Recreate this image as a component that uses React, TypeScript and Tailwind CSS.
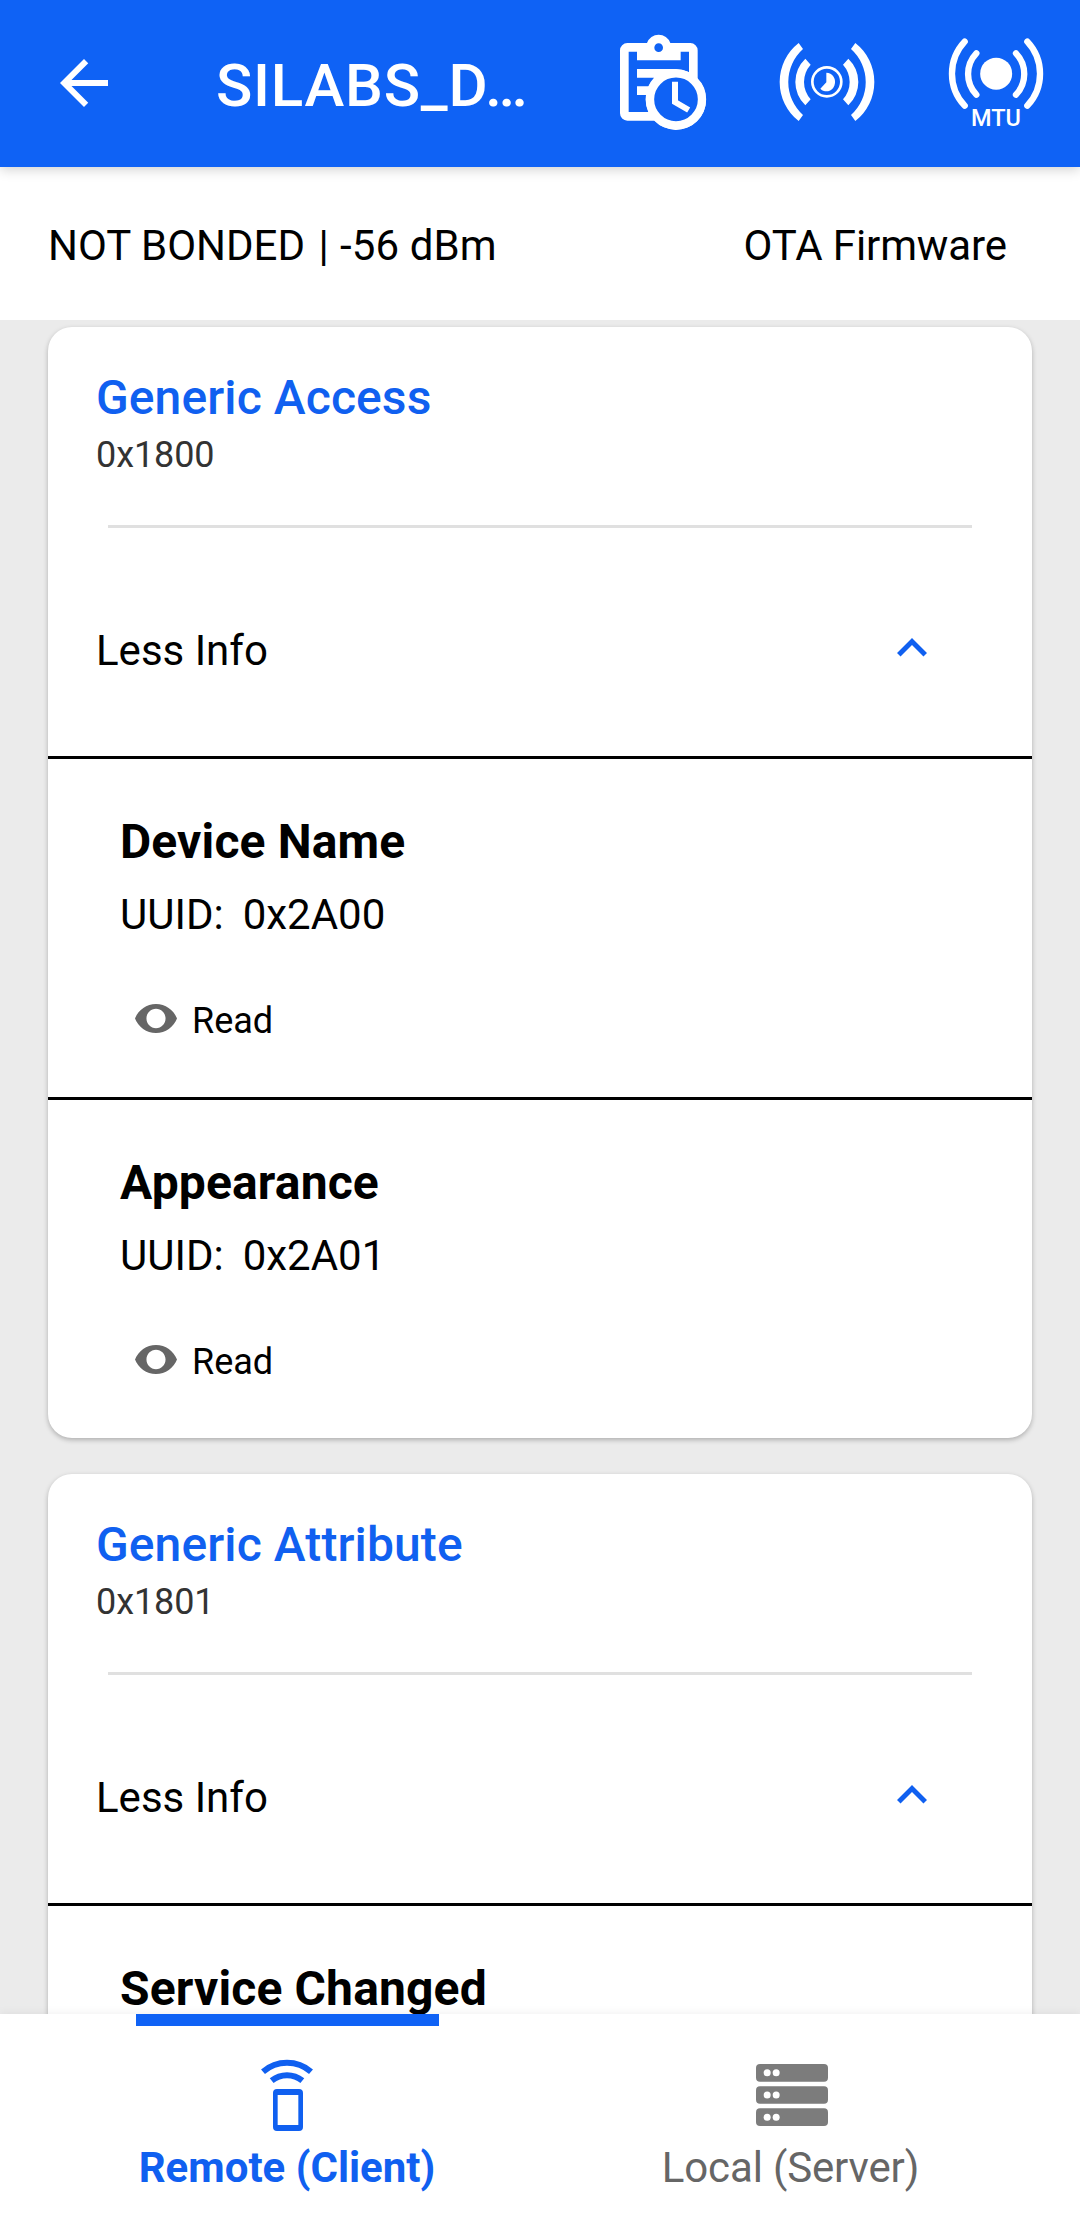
type Characteristic = { name: string; uuid: string };
type Service = { name: string; uuid: string; characteristics: Characteristic[] };

const services: Service[] = [
  {
    name: 'Generic Access',
    uuid: '0x1800',
    characteristics: [
      { name: 'Device Name', uuid: '0x2A00' },
      { name: 'Appearance', uuid: '0x2A01' },
    ],
  },
  {
    name: 'Generic Attribute',
    uuid: '0x1801',
    characteristics: [{ name: 'Service Changed', uuid: '' }],
  },
];

function BackIcon() {
  return (
    <svg className="size-[72px]" viewBox="0 0 24 24" fill="currentColor">
      <path d="M20 11H7.83l5.59-5.59L12 4l-8 8 8 8 1.41-1.41L7.83 13H20v-2z" />
    </svg>
  );
}

function LogIcon() {
  return (
    <svg className="h-[96px] w-[87px] shrink-0" viewBox="60 43 261 288">
      <path
        fill="white"
        fillRule="evenodd"
        d="M82 70H141A37 37 0 0 1 211 70H271A22 22 0 0 1 293 92V178A90 90 0 1 1 163 303H82A22 22 0 0 1 60 281V92A22 22 0 0 1 82 70ZM86 96V277H145A90 90 0 0 1 138 226H111V200H145A90 90 0 0 1 162 174H111V148H228A90 90 0 0 1 267 158V96H242V122H111V96ZM176 71A13 13 0 1 0 176 97A13 13 0 1 0 176 71Z"
      />
      <circle cx="228" cy="239" r="78" fill="#0f62f5" stroke="white" strokeWidth="25" />
      <path d="M225 186V247L266 271" fill="none" stroke="white" strokeWidth="18" />
    </svg>
  );
}

function IntervalIcon() {
  return (
    <svg className="h-[80px] w-[96px] shrink-0" viewBox="538 66 288 240">
      <g fill="white">
        <path d="M597 69A148.6 148.6 0 0 0 597 303L610 285A133 133 0 0 1 610 87Z" />
        <path d="M617 116A96.7 96.7 0 0 0 617 256L633 238A77.6 77.6 0 0 1 633 134Z" />
        <path d="M767 69A148.6 148.6 0 0 1 767 303L754 285A133 133 0 0 0 754 87Z" />
        <path d="M746 116A96.7 96.7 0 0 1 746 256L730 238A77.6 77.6 0 0 0 730 134Z" />
        <path d="M680 158A26 28 0 1 1 662 206L680 187Z" />
      </g>
      <circle cx="681.5" cy="185.5" r="43.5" fill="none" stroke="white" strokeWidth="8" />
    </svg>
  );
}

function MtuIcon() {
  return (
    <div className="relative h-[90px] w-[96px] shrink-0">
      <svg className="h-[90px] w-[96px]" viewBox="323 55 288 270">
        <circle cx="467.5" cy="162" r="48" fill="white" />
        <g fill="none" stroke="white" strokeWidth="19" strokeLinecap="round">
          <path d="M373 66A140 140 0 0 0 373 258" />
          <path d="M408 101A90 90 0 0 0 408 225" />
          <path d="M561 66A140 140 0 0 1 561 258" />
          <path d="M527 101A90 90 0 0 1 527 225" />
        </g>
      </svg>
      <span className="absolute top-[65px] left-[23px] text-[23.5px] leading-[30px] font-medium">MTU</span>
    </div>
  );
}

function ChevronUp() {
  return (
    <svg className="size-[60px]" viewBox="0 0 24 24" fill="currentColor">
      <path d="M12 8l-6 6 1.41 1.41L12 10.83l4.59 4.58L18 14z" />
    </svg>
  );
}

function EyeIcon() {
  return (
    <svg className="h-[29px] w-[42px]" viewBox="1 4.5 22 15" preserveAspectRatio="none" fill="#666666">
      <path d="M12 4.5C7 4.5 2.73 7.61 1 12c1.73 4.39 6 7.5 11 7.5s9.27-3.11 11-7.5c-1.73-4.39-6-7.5-11-7.5zM12 17c-2.76 0-5-2.24-5-5s2.24-5 5-5 5 2.24 5 5-2.24 5-5 5z" />
    </svg>
  );
}

function RemoteIcon() {
  return (
    <svg className="h-[72px] w-[52px]" viewBox="423 537 156 216">
      <g fill="none" stroke="currentColor" strokeWidth="18">
        <path d="M429 575A110 110 0 0 1 573 575" />
        <path d="M455 602A72 72 0 0 1 547 602" />
      </g>
      <path
        fill="currentColor"
        fillRule="evenodd"
        d="M471 627H537A12 12 0 0 1 549 639V741A12 12 0 0 1 537 753H471A12 12 0 0 1 459 741V639A12 12 0 0 1 471 627ZM473 645V735H535V645Z"
      />
    </svg>
  );
}

function ServerIcon() {
  return (
    <svg className="h-[62px] w-[72px]" viewBox="0 0 216 186">
      {[0, 66.5, 133].map((y) => (
        <g key={y}>
          <rect y={y} width="216" height="53" rx="12" fill="#7c7c7c" />
          <circle cx="33.5" cy={y + 26.5} r="10.5" fill="white" />
          <circle cx="60.5" cy={y + 26.5} r="10.5" fill="white" />
        </g>
      ))}
    </svg>
  );
}

function CharacteristicRow({ name, uuid }: Characteristic) {
  return (
    <div className="border-t-[3px] border-black pt-[55px] pb-[55px] pl-[72px]">
      <h3 className="text-[48px] leading-[56px] font-bold tracking-[0.15px]">{name}</h3>
      {uuid && (
        <>
          <p className="mt-[20px] flex gap-[19px] text-[42px] leading-[50px]">
            <span>UUID:</span>
            <span>{uuid}</span>
          </p>
          <div className="mt-[60px] flex h-[42px] items-start pl-[15px]">
            <div className="mt-[4px]">
              <EyeIcon />
            </div>
            <span className="ml-[15px] text-[36px] leading-[42px]">Read</span>
          </div>
        </>
      )}
    </div>
  );
}

function ServiceCard({ name, uuid, characteristics }: Service) {
  return (
    <section className="shrink-0 overflow-hidden rounded-[24px] bg-white shadow-[0_2px_5px_rgba(0,0,0,0.26)]">
      <div className="px-[48px] pt-[43px]">
        <h2 className="text-[48px] leading-[56px] font-medium tracking-[0.1px] text-[#1060f0]">{name}</h2>
        <p className="mt-[8px] text-[36px] leading-[42px] tracking-[-0.1px] text-[#333333]">{uuid}</p>
      </div>
      <div className="mx-[60px] mt-[49px] h-[3px] bg-[#e0e0e0]" />
      <div className="flex h-[228px] items-start justify-between pr-[90px] pl-[48px]">
        <span className="mt-[98px] text-[42px] leading-[50px]">Less Info</span>
        <span className="mt-[90px] text-[#1060f0]">
          <ChevronUp />
        </span>
      </div>
      {characteristics.map((c) => (
        <CharacteristicRow key={c.name} {...c} />
      ))}
    </section>
  );
}

export default function App() {
  return (
    <div className="flex h-[2231px] w-[1080px] flex-col overflow-hidden bg-[#ebebeb] font-['Roboto',sans-serif] text-black">
      <header className="relative z-10 flex h-[167px] shrink-0 items-start bg-[#0f62f5] text-white shadow-[0_2px_12px_rgba(0,0,0,0.2)]">
        <div className="mt-[47px] ml-[48px]">
          <BackIcon />
        </div>
        <h1 className="mt-[51px] ml-[96px] w-[404px] text-[60px] leading-[70px] font-medium tracking-[0.75px]">
          SILABS_D…
        </h1>
        <div className="mt-[34px]">
          <LogIcon />
        </div>
        <div className="mt-[42px] ml-[72px]">
          <IntervalIcon />
        </div>
        <div className="mt-[38px] ml-[73px]">
          <MtuIcon />
        </div>
      </header>

      <div className="flex h-[153px] shrink-0 items-start justify-between bg-white pt-[54px] pr-[73px] pl-[48px] text-[42px] leading-[50px]">
        <span className="flex whitespace-pre">
          <span>NOT BONDED </span>
          <span className="ml-[3px]">| </span>
          <span className="ml-[1px] tracking-[0.1px]">-56 dBm</span>
        </span>
        <span className="tracking-[-0.1px]">OTA Firmware</span>
      </div>

      <main className="flex min-h-0 flex-1 flex-col gap-[36px] overflow-hidden px-[48px] pt-[7px]">
        {services.map((s) => (
          <ServiceCard key={s.uuid} {...s} />
        ))}
      </main>

      <nav className="relative flex h-[217px] shrink-0 bg-white px-[36px] text-[42px] leading-[50px] shadow-[0_-2px_8px_rgba(0,0,0,0.05)]">
        <div className="flex w-[503px] flex-col items-center text-[#1060f0]">
          <div className="h-[12px] w-[303px] bg-[#0f62f5]" />
          <div className="mt-[33px] mr-[1px]">
            <RemoteIcon />
          </div>
          <span className="mt-[12px] mr-[1px] font-bold">Remote (Client)</span>
        </div>
        <div className="flex w-[505px] flex-col items-center text-[#666666]">
          <div className="mt-[50px]">
            <ServerIcon />
          </div>
          <span className="mt-[17px] mr-[2px] tracking-[-0.15px]">Local (Server)</span>
        </div>
      </nav>
    </div>
  );
}
